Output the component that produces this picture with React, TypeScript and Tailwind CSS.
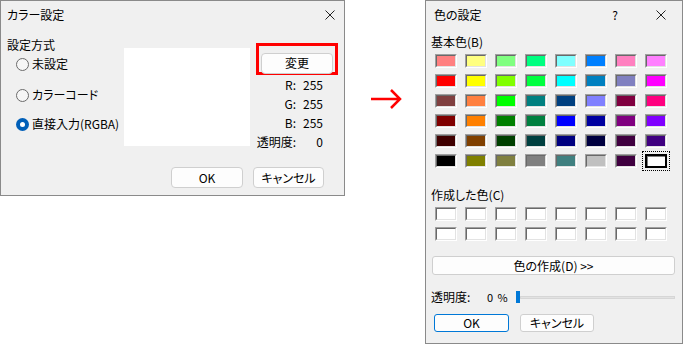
import React from "react";

const BASIC = [
  ["#ff8080", "#ffff80", "#80ff80", "#00ff80", "#80ffff", "#0080ff", "#ff80c0", "#ff80ff"],
  ["#ff0000", "#ffff00", "#80ff00", "#00ff40", "#00ffff", "#0080c0", "#8080c0", "#ff00ff"],
  ["#804040", "#ff8040", "#00ff00", "#008080", "#004080", "#8080ff", "#800040", "#ff0080"],
  ["#800000", "#ff8000", "#008000", "#008040", "#0000ff", "#0000a0", "#800080", "#8000ff"],
  ["#400000", "#804000", "#004000", "#004040", "#000080", "#000040", "#400040", "#400080"],
  ["#000000", "#808000", "#808040", "#808080", "#408080", "#c0c0c0", "#400040", "#ffffff"],
];

const font = "font-['Noto_Sans_CJK_JP',sans-serif] [font-feature-settings:'palt']";

function CloseIcon() {
  return (
    <svg width="10" height="10" viewBox="0 0 10 10">
      <path d="M0.5 0.5 L9.5 9.5 M9.5 0.5 L0.5 9.5" stroke="#222" strokeWidth="1" />
    </svg>
  );
}

function Radio({ checked, label, className }: { checked?: boolean; label: string; className?: string }) {
  return (
    <div className={`flex items-center h-[16px] ${className ?? ""}`}>
      {checked ? (
        <span className="ml-[9px] w-[13px] h-[13px] rounded-full bg-[#005fb8] flex items-center justify-center">
          <span className="w-[5px] h-[5px] rounded-full bg-white" />
        </span>
      ) : (
        <span className="ml-[9px] w-[13px] h-[13px] rounded-full border border-[#6b6b6b] bg-[#f6f6f6]" />
      )}
      <span className="ml-[3px] text-[12px] leading-[16px]">{label}</span>
    </div>
  );
}

function Swatch({ color, selected }: { color: string; selected?: boolean }) {
  if (selected) {
    return (
      <span className="w-[22px] h-[14px] flex outline-1 outline-dotted outline-black outline-offset-[2px]">
        <span className="flex-1 border-2 border-black flex">
          <span className="flex-1 border-t border-l border-[#808080]" style={{ background: color }} />
        </span>
      </span>
    );
  }
  return (
    <span className="w-[22px] h-[14px] flex border-t border-l border-[#a0a0a0] border-b border-r border-b-white border-r-white">
      <span className="flex-1 border-t border-l border-[#696969] border-b border-r border-b-[#e3e3e3] border-r-[#e3e3e3]" style={{ background: color }} />
    </span>
  );
}

function LeftDialog() {
  return (
    <div className="w-[345px] h-[196px] shrink-0 border border-[#8a8a8a] bg-[#f0f0f0] flex flex-col text-black">
      <div className="h-[27px] flex items-center justify-between pl-[6px] pr-[9px]">
        <span className="text-[12px] leading-[16px]">カラー設定</span>
        <CloseIcon />
      </div>
      <div className="h-[130px] flex pl-[6px]">
        <div className="w-[117px] flex flex-col">
          <span className="mt-[9px] text-[12px] leading-[16px]">設定方式</span>
          <Radio className="mt-[3px]" label="未設定" />
          <Radio className="mt-[15px]" label="カラーコード" />
          <Radio className="mt-[13px]" label="直接入力(RGBA)" checked />
        </div>
        <div className="w-[126px] h-[98px] mt-[20px] bg-white" />
        <div className="ml-[6px] mt-[15px] flex flex-col">
          <div className="w-[82px] h-[32px] border-[3px] border-[#ff0000] pl-[2px] pt-[3px]">
            <button className="w-[72px] h-[21px] rounded-[4px] border border-[#cfcfcf] bg-[#fdfdfd] text-[12px] leading-[16px]">
              変更
            </button>
          </div>
          {[["R:", "255"], ["G:", "255"], ["B:", "255"], ["透明度:", "0"]].map(([l, v]) => (
            <div key={l} className="flex h-[19px] items-center text-[12px] leading-[16px] whitespace-nowrap">
              <span className="w-[40px] text-right">{l}</span>
              <span className="w-[27px] text-right">{v}</span>
            </div>
          ))}
        </div>
      </div>
      <div className="mt-[9px] flex justify-end gap-[10px] pr-[20px]">
        <button className="w-[72px] h-[21px] rounded-[4px] border border-[#cfcfcf] bg-[#fdfdfd] text-[12px] leading-[16px]">
          OK
        </button>
        <button className="w-[71px] h-[21px] rounded-[4px] border border-[#cfcfcf] bg-[#fdfdfd] text-[12px] leading-[16px]">
          キャンセル
        </button>
      </div>
    </div>
  );
}

function RightDialog() {
  return (
    <div className="w-[258px] h-[344px] shrink-0 border border-[#8a8a8a] bg-[#f0f0f0] flex flex-col text-black">
      <div className="h-[27px] flex items-center pl-[8px] pr-[16px]">
        <span className="text-[12px] leading-[16px]">色の設定</span>
        <span className="ml-auto text-[12px] leading-[16px]">?</span>
        <span className="ml-[38px]">
          <CloseIcon />
        </span>
      </div>
      <span className="mt-[6px] ml-[5px] text-[12px] leading-[16px]">基本色(B)</span>
      <div className="mt-[4px] ml-[9px] grid grid-cols-[repeat(8,22px)] gap-x-[8px] gap-y-[6px]">
        {BASIC.flatMap((row, r) =>
          row.map((c, i) => <Swatch key={`${r}-${i}`} color={c} selected={r === 5 && i === 7} />)
        )}
      </div>
      <span className="mt-[19px] ml-[5px] text-[12px] leading-[16px]">作成した色(C)</span>
      <div className="mt-[4px] ml-[9px] grid grid-cols-[repeat(8,22px)] gap-x-[8px] gap-y-[6px]">
        {Array.from({ length: 16 }).map((_, i) => (
          <Swatch key={i} color="#ffffff" />
        ))}
      </div>
      <button className="mt-[15px] ml-[6px] w-[243px] h-[19px] rounded-[3px] border border-[#cfcfcf] bg-[#fdfdfd] text-[12px] leading-[16px]">
        色の作成(D) &gt;&gt;
      </button>
      <div className="mt-[14px] ml-[5px] flex items-center h-[16px]">
        <span className="w-[56px] text-[12px] leading-[16px]">透明度:</span>
        <span className="text-[11px] leading-[16px] tracking-[1px]">0 %</span>
        <div className="ml-[7px] flex-1 mr-[7px] flex items-center">
          <span className="w-[4px] h-[12px] bg-[#0078d7]" />
          <span className="flex-1 h-[3px] bg-[#e2e2e2] border border-[#d6d6d6]" />
        </div>
      </div>
      <div className="mt-[9px] ml-[8px] flex gap-[11px]">
        <button className="w-[75px] h-[18px] rounded-[3px] border border-[#0078d7] bg-[#fdfdfd] text-[12px] leading-[16px]">
          OK
        </button>
        <button className="w-[74px] h-[18px] rounded-[3px] border border-[#cfcfcf] bg-[#fdfdfd] text-[12px] leading-[16px]">
          キャンセル
        </button>
      </div>
    </div>
  );
}

export default function App() {
  return (
    <div className={`w-[684px] h-[345px] bg-white flex items-start ${font}`}>
      <LeftDialog />
      <svg className="ml-[25px] mt-[88px] shrink-0" width="32" height="22" viewBox="0 0 32 22">
        <path d="M1 11 H30 M21 2 L30 11 L21 20" stroke="#ff0000" strokeWidth="2.5" fill="none" />
      </svg>
      <div className="ml-[23px]">
        <RightDialog />
      </div>
    </div>
  );
}
